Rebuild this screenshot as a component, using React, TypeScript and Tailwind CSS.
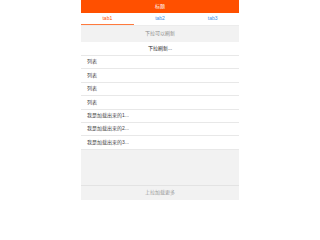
import React from "react";

const rows = ["列表", "列表", "列表", "列表", "我是加载出来的1...", "我是加载出来的2...", "我是加载出来的3..."];

const App = () => {
  const tabs = ["tab1", "tab2", "tab3"];
  const active = 0;

  return (
    <div className="w-full h-[200px] bg-white flex justify-center font-['Liberation_Sans','Noto_Sans_CJK_SC',sans-serif]">
      <div className="w-[158px] h-full flex flex-col bg-[#f2f2f2]">
        <div className="h-[13px] bg-[#ff5000] flex items-center justify-center text-white text-[5px]">标题</div>
        <div className="h-[13px] bg-white flex border-b border-[#ececec]">
          {tabs.map((tab, i) => (
            <div
              key={tab}
              className={
                i === active
                  ? "flex-1 flex items-center justify-center text-[5px] text-[#ff5000] border-b border-[#ff7a3d]"
                  : "flex-1 flex items-center justify-center text-[5px] text-[#3a8ee6]"
              }
            >
              {tab}
            </div>
          ))}
        </div>
        <div className="h-[16px] flex items-center justify-center text-[5px] text-[#8a8a8a]">下拉可以刷新</div>
        <div className="h-[14px] bg-white border-b border-[#e8e8e8] flex items-center justify-center text-[5px] text-[#222]">
          下拉刷新...
        </div>
        {rows.map((row, i) => (
          <div key={i} className="h-[13.4px] bg-white border-b border-[#e8e8e8] flex items-center px-[6px] text-[5px] text-[#444]">
            {row}
          </div>
        ))}
        <div className="flex-1" />
        <div className="h-[15px] border-t border-[#e3e3e3] flex items-center justify-center text-[5px] text-[#999]">上拉加载更多</div>
      </div>
    </div>
  );
};

export default App;
